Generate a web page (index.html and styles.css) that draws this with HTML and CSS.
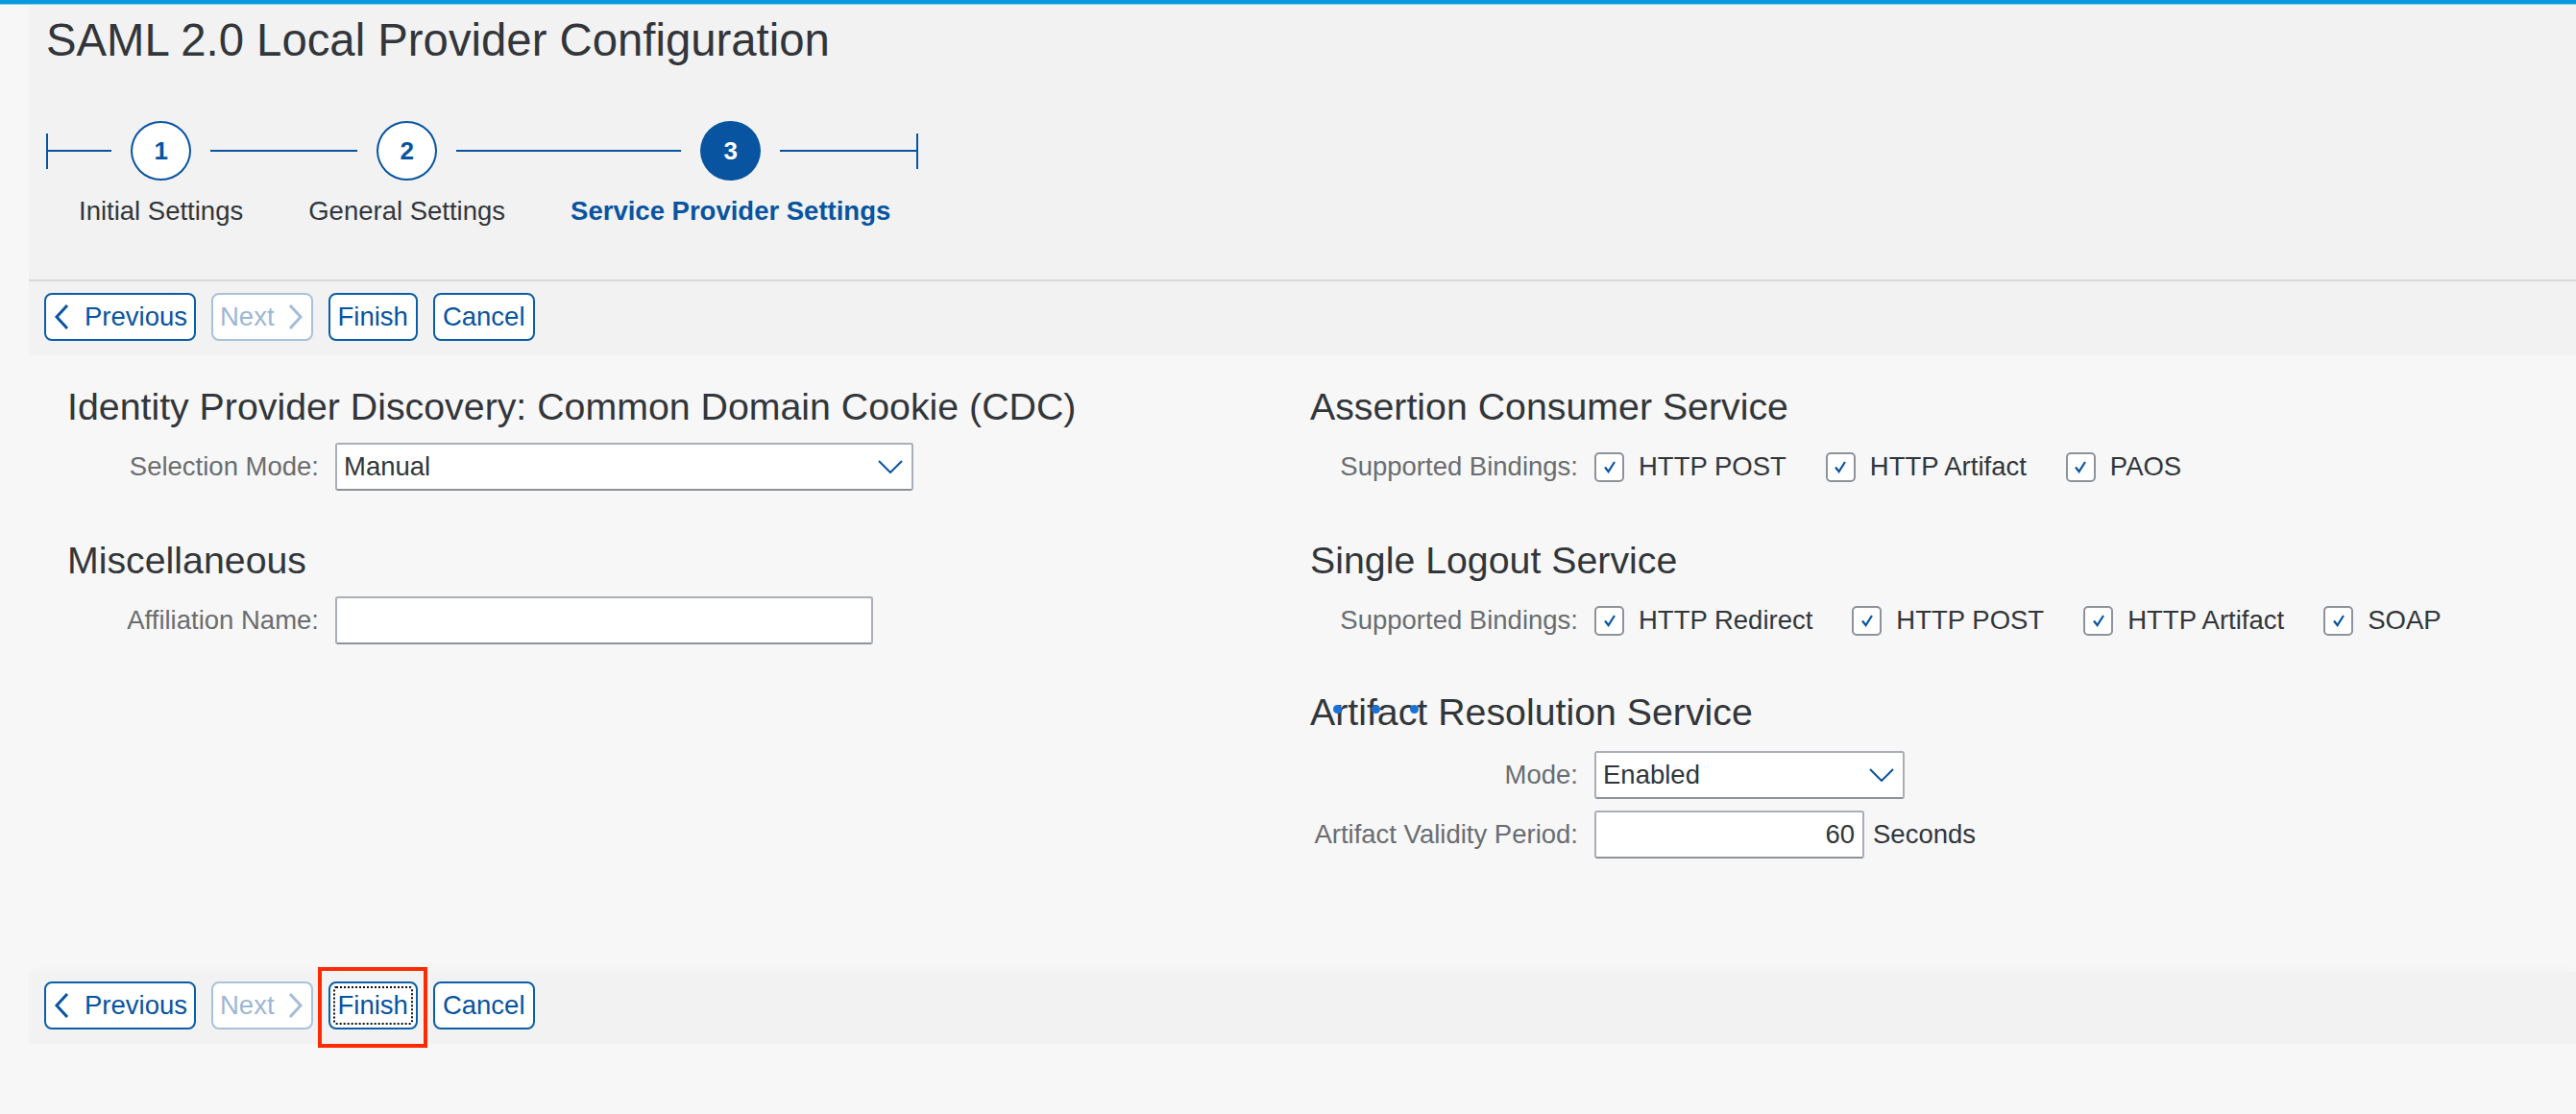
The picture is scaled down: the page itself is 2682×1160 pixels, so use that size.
FILE: index.html
```html
<!DOCTYPE html>
<html lang="en">
<head>
<meta charset="utf-8">
<title>SAML 2.0 Local Provider Configuration</title>
<link rel="stylesheet" href="styles.css">
</head>
<body>
<div class="topbar"></div>
<div class="page">
  <header class="header">
    <h1 class="title">SAML 2.0 Local Provider Configuration</h1>
    <ol class="roadmap">
      <li class="step"><span class="step-num">1</span><span class="step-label">Initial Settings</span></li>
      <li class="step"><span class="step-num">2</span><span class="step-label">General Settings</span></li>
      <li class="step step-current"><span class="step-num">3</span><span class="step-label">Service Provider Settings</span></li>
    </ol>
  </header>

  <div class="toolbar">
    <button class="btn" type="button"><svg class="chev" width="18" height="28" viewBox="0 0 18 28"><polyline points="15,2 4,14 15,26"/></svg>Previous</button>
    <button class="btn btn-disabled" type="button">Next<svg class="chev" width="18" height="28" viewBox="0 0 18 28"><polyline points="3,2 14,14 3,26"/></svg></button>
    <button class="btn btn-text" type="button">Finish</button>
    <button class="btn btn-text" type="button">Cancel</button>
  </div>

  <main class="content">
    <div class="col col-left">
      <section class="group">
        <h2 class="group-title">Identity Provider Discovery: Common Domain Cookie (CDC)</h2>
        <div class="form-row">
          <span class="form-label">Selection Mode:</span>
          <div class="select select-cdc"><span>Manual</span><svg class="down" width="26" height="14" viewBox="0 0 26 14"><polyline points="1,1 13,13 25,1"/></svg></div>
        </div>
      </section>
      <section class="group">
        <h2 class="group-title">Miscellaneous</h2>
        <div class="form-row">
          <span class="form-label">Affiliation Name:</span>
          <div class="select input-aff"></div>
        </div>
      </section>
    </div>

    <div class="col col-right">
      <section class="group">
        <h2 class="group-title">Assertion Consumer Service</h2>
        <div class="form-row">
          <span class="form-label">Supported Bindings:</span>
          <div class="checks">
            <span class="check"><span class="cb"><svg width="14" height="14" viewBox="0 0 14 14"><polyline points="2,7.5 5.6,12 12,2"/></svg></span>HTTP POST</span>
            <span class="check"><span class="cb"><svg width="14" height="14" viewBox="0 0 14 14"><polyline points="2,7.5 5.6,12 12,2"/></svg></span>HTTP Artifact</span>
            <span class="check"><span class="cb"><svg width="14" height="14" viewBox="0 0 14 14"><polyline points="2,7.5 5.6,12 12,2"/></svg></span>PAOS</span>
          </div>
        </div>
      </section>
      <section class="group">
        <h2 class="group-title">Single Logout Service</h2>
        <div class="form-row">
          <span class="form-label">Supported Bindings:</span>
          <div class="checks">
            <span class="check"><span class="cb"><svg width="14" height="14" viewBox="0 0 14 14"><polyline points="2,7.5 5.6,12 12,2"/></svg></span>HTTP Redirect</span>
            <span class="check"><span class="cb"><svg width="14" height="14" viewBox="0 0 14 14"><polyline points="2,7.5 5.6,12 12,2"/></svg></span>HTTP POST</span>
            <span class="check"><span class="cb"><svg width="14" height="14" viewBox="0 0 14 14"><polyline points="2,7.5 5.6,12 12,2"/></svg></span>HTTP Artifact</span>
            <span class="check"><span class="cb"><svg width="14" height="14" viewBox="0 0 14 14"><polyline points="2,7.5 5.6,12 12,2"/></svg></span>SOAP</span>
          </div>
        </div>
      </section>
      <section class="group group-artifact">
        <h2 class="group-title">Artifact Resolution Service<span class="busy"><i></i><i></i><i></i></span></h2>
        <div class="form-row">
          <span class="form-label">Mode:</span>
          <div class="select select-mode"><span>Enabled</span><svg class="down" width="26" height="14" viewBox="0 0 26 14"><polyline points="1,1 13,13 25,1"/></svg></div>
        </div>
        <div class="form-row">
          <span class="form-label">Artifact Validity Period:</span>
          <div class="field-group">
            <div class="select input-num"><span>60</span></div>
            <span class="unit">Seconds</span>
          </div>
        </div>
      </section>
    </div>
  </main>

  <div class="toolbar toolbar-bottom">
    <button class="btn" type="button"><svg class="chev" width="18" height="28" viewBox="0 0 18 28"><polyline points="15,2 4,14 15,26"/></svg>Previous</button>
    <button class="btn btn-disabled" type="button">Next<svg class="chev" width="18" height="28" viewBox="0 0 18 28"><polyline points="3,2 14,14 3,26"/></svg></button>
    <span class="highlight"><button class="btn btn-text btn-focus" type="button">Finish</button></span>
    <button class="btn btn-text" type="button">Cancel</button>
  </div>
</div>
</body>
</html>
```

FILE: styles.css
```css
* { box-sizing: border-box; }

html, body { margin: 0; padding: 0; }

body {
  width: 2682px;
  height: 1160px;
  overflow: hidden;
  background: #f7f7f7;
  font-family: "Liberation Sans", Arial, sans-serif;
  font-size: 27.5px;
  color: #32363a;
}

.topbar {
  height: 5px;
  background: #0799dd;
  border-bottom: 1px solid #86cdee;
}

.page { margin-left: 30px; }

/* Header */
.header {
  height: 288px;
  background: #f2f2f2;
  padding: 14px 0 0 18px;
  border-bottom: 2px solid #d9d9d9;
}

.title {
  margin: 0;
  font-size: 47.3px;
  line-height: 46px;
  font-weight: normal;
  color: #32363a;
}

.roadmap {
  position: relative;
  display: flex;
  gap: 68px;
  width: max-content;
  margin: 61px 0 0;
  padding: 0 29px 0 34px;
  list-style: none;
}

.roadmap::before {
  content: "";
  position: absolute;
  left: 0;
  right: 0;
  top: 30px;
  height: 2px;
  background: #0854a0;
}

.roadmap::after {
  content: "";
  position: absolute;
  left: 0;
  right: 0;
  top: 13px;
  height: 37px;
  border-left: 2px solid #0854a0;
  border-right: 2px solid #0854a0;
}

.step {
  display: flex;
  flex-direction: column;
  align-items: center;
  gap: 16px;
}

.step-num {
  position: relative;
  z-index: 1;
  width: 63px;
  height: 62px;
  display: flex;
  align-items: center;
  justify-content: center;
  border: 2px solid #0854a0;
  border-radius: 50%;
  background: #fff;
  box-shadow: 0 0 0 20px #f2f2f2;
  color: #0854a0;
  font-size: 26px;
  font-weight: bold;
}

.step-label {
  position: relative;
  z-index: 2;
  line-height: 32px;
  white-space: nowrap;
  color: #32363a;
}

.step-current .step-num {
  background: #0854a0;
  color: #fff;
}

.step-current .step-label {
  color: #0854a0;
  font-weight: bold;
}

/* Toolbar */
.toolbar {
  display: flex;
  gap: 16px;
  padding: 12px 16px 15px;
  background: #f2f2f2;
}

.toolbar-bottom {
  padding: 10px 16px 15px;
  box-shadow: 0 -5px 8px -3px rgba(0, 0, 0, 0.025);
}

.btn {
  display: inline-flex;
  align-items: center;
  gap: 15px;
  height: 50px;
  padding: 0 7px;
  margin: 0;
  border: 2px solid #0b5ea8;
  border-radius: 8px;
  background: #fff;
  color: #0854a0;
  font: inherit;
  white-space: nowrap;
}

.btn-text { padding: 0 8px; }

.btn .chev polyline {
  fill: none;
  stroke: #0854a0;
  stroke-width: 3;
}

.btn-disabled {
  gap: 13px;
  border-color: #a9c1dc;
  color: #9db6d3;
}

.btn-disabled .chev polyline { stroke: #a5bcd8; }

.btn-focus {
  outline: 2px dotted #111;
  outline-offset: -7px;
}

.highlight {
  position: relative;
  display: flex;
}

.highlight::after {
  content: "";
  position: absolute;
  left: -11px;
  top: -15px;
  right: -10px;
  bottom: -19px;
  border: 4px solid #ff2a00;
  pointer-events: none;
}

/* Content */
.content {
  display: grid;
  grid-template-columns: 1294px 1fr;
  height: 642px;
  padding: 30px 0 0 40px;
}

.group + .group { margin-top: 49px; }

.group-title {
  position: relative;
  margin: 0 0 15px;
  font-size: 39.3px;
  line-height: 46px;
  font-weight: normal;
  color: #32363a;
  white-space: nowrap;
}

.group-artifact { margin-top: 47px !important; }
.group-artifact .group-title { margin-bottom: 18px; }

.busy {
  position: absolute;
  left: 24px;
  top: 16px;
  display: flex;
  gap: 31px;
}

.busy i {
  width: 9px;
  height: 9px;
  border-radius: 50%;
  background: #1a73d6;
}

.form-row {
  display: flex;
  align-items: center;
  gap: 17px;
  height: 50px;
}

.form-row + .form-row { margin-top: 12px; }

.form-label {
  flex: none;
  text-align: right;
  color: #6a6d70;
  white-space: nowrap;
}

.col-left .form-label { width: 262px; }
.col-right .form-label { width: 279px; }

.select {
  display: flex;
  align-items: center;
  justify-content: space-between;
  height: 50px;
  padding: 0 9px 0 7px;
  background: #fff;
  border: 2px solid #a9afb5;
  border-bottom-color: #8c9298;
  border-radius: 3px;
  color: #32363a;
}

.select .down polyline {
  fill: none;
  stroke: #0854a0;
  stroke-width: 2;
}

.select-cdc { width: 602px; }
.input-aff { width: 560px; }
.select-mode { width: 323px; }

.field-group {
  display: flex;
  align-items: center;
  gap: 9px;
}

.input-num {
  width: 281px;
  justify-content: flex-end;
  padding-right: 8px;
}

.unit { color: #32363a; }

.checks {
  display: flex;
  align-items: center;
  gap: 41px;
}

.check {
  display: flex;
  align-items: center;
  gap: 15px;
  white-space: nowrap;
  color: #32363a;
}

.cb {
  width: 31px;
  height: 31px;
  display: flex;
  align-items: center;
  justify-content: center;
  background: #fff;
  border: 2px solid #8d9399;
  border-radius: 5px;
}

.cb polyline {
  fill: none;
  stroke: #0854a0;
  stroke-width: 2.2;
}
```
